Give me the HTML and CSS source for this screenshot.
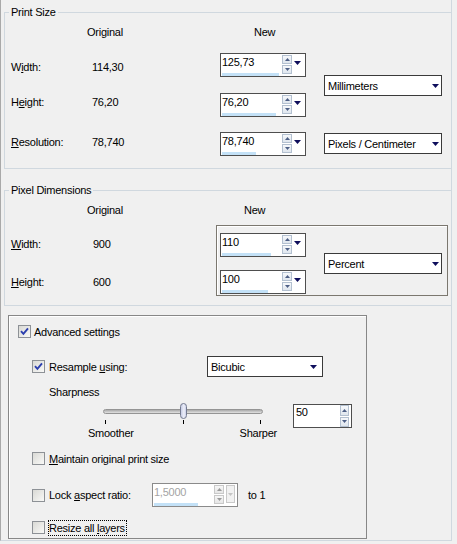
FILE: index.html
```html
<!DOCTYPE html>
<html>
<head>
<meta charset="utf-8">
<link rel="stylesheet" href="styles.css">
</head>
<body>
<div class="dialog">

  <fieldset class="grp print">
    <legend>Print Size</legend>
    <div class="cols">
      <div class="lcol">
        <div class="hdr">Original</div>
        <div class="lrow p1"><span class="lbl">W<u>i</u>dth:</span><span>114,30</span></div>
        <div class="lrow p2"><span class="lbl">H<u>e</u>ight:</span><span>76,20</span></div>
        <div class="lrow p3"><span class="lbl"><u>R</u>esolution:</span><span>78,740</span></div>
      </div>
      <div class="ncol">
        <div class="hdr nhdr">New</div>
        <div class="spin s1">
          <div class="field"><span class="val">125,73</span><span class="bar" style="width:57px"></span></div>
          <div class="btns"><span class="b up"><svg width="5" height="3" viewBox="0 0 5 3"><path d="M0 3h5L2.5 0z"/></svg></span><span class="b dn"><svg width="5" height="3" viewBox="0 0 5 3"><path d="M0 0h5L2.5 3z"/></svg></span></div>
          <div class="drop"><svg width="7" height="4" viewBox="0 0 7 4"><path d="M0 0h7L3.5 4z"/></svg></div>
        </div>
        <div class="spin s2">
          <div class="field"><span class="val">76,20</span><span class="bar" style="width:54px"></span></div>
          <div class="btns"><span class="b up"><svg width="5" height="3" viewBox="0 0 5 3"><path d="M0 3h5L2.5 0z"/></svg></span><span class="b dn"><svg width="5" height="3" viewBox="0 0 5 3"><path d="M0 0h5L2.5 3z"/></svg></span></div>
          <div class="drop"><svg width="7" height="4" viewBox="0 0 7 4"><path d="M0 0h7L3.5 4z"/></svg></div>
        </div>
        <div class="spin s3">
          <div class="field"><span class="val">78,740</span><span class="bar" style="width:34px"></span></div>
          <div class="btns"><span class="b up"><svg width="5" height="3" viewBox="0 0 5 3"><path d="M0 3h5L2.5 0z"/></svg></span><span class="b dn"><svg width="5" height="3" viewBox="0 0 5 3"><path d="M0 0h5L2.5 3z"/></svg></span></div>
          <div class="drop"><svg width="7" height="4" viewBox="0 0 7 4"><path d="M0 0h7L3.5 4z"/></svg></div>
        </div>
      </div>
      <div class="ucol">
        <div class="sel u1"><span>Millimeters</span><svg width="7" height="4" viewBox="0 0 7 4"><path d="M0 0h7L3.5 4z"/></svg></div>
        <div class="sel u2"><span>Pixels / Centimeter</span><svg width="7" height="4" viewBox="0 0 7 4"><path d="M0 0h7L3.5 4z"/></svg></div>
      </div>
    </div>
  </fieldset>

  <fieldset class="grp pixel">
    <legend>Pixel Dimensions</legend>
    <div class="cols">
      <div class="lcol lcol2">
        <div class="hdr">Original</div>
        <div class="lrow q1"><span class="lbl"><u>W</u>idth:</span><span class="pv">900</span></div>
        <div class="lrow q2"><span class="lbl"><u>H</u>eight:</span><span class="pv">600</span></div>
      </div>
      <div class="ncol2">
        <div class="hdr nhdr2">New</div>
        <div class="pbox">
          <div class="pspins">
            <div class="spin">
              <div class="field"><span class="val">110</span><span class="bar" style="width:49px"></span></div>
              <div class="btns"><span class="b up"><svg width="5" height="3" viewBox="0 0 5 3"><path d="M0 3h5L2.5 0z"/></svg></span><span class="b dn"><svg width="5" height="3" viewBox="0 0 5 3"><path d="M0 0h5L2.5 3z"/></svg></span></div>
              <div class="drop"><svg width="7" height="4" viewBox="0 0 7 4"><path d="M0 0h7L3.5 4z"/></svg></div>
            </div>
            <div class="spin s4">
              <div class="field"><span class="val">100</span><span class="bar" style="width:46px"></span></div>
              <div class="btns"><span class="b up"><svg width="5" height="3" viewBox="0 0 5 3"><path d="M0 3h5L2.5 0z"/></svg></span><span class="b dn"><svg width="5" height="3" viewBox="0 0 5 3"><path d="M0 0h5L2.5 3z"/></svg></span></div>
              <div class="drop"><svg width="7" height="4" viewBox="0 0 7 4"><path d="M0 0h7L3.5 4z"/></svg></div>
            </div>
          </div>
          <div class="sel pct"><span>Percent</span><svg width="7" height="4" viewBox="0 0 7 4"><path d="M0 0h7L3.5 4z"/></svg></div>
        </div>
      </div>
    </div>
  </fieldset>

  <div class="adv">
    <div class="arow a1">
      <span class="cb"><svg width="11" height="11" viewBox="0 0 11 11"><path d="M2 5.2l2.4 2.6L9 2.4"/></svg></span>
      <span class="atext">Advanced settings</span>
    </div>
    <div class="arow a2">
      <span class="cb"><svg width="11" height="11" viewBox="0 0 11 11"><path d="M2 5.2l2.4 2.6L9 2.4"/></svg></span>
      <span class="ltext rlabel">Resample <u>u</u>sing:</span>
      <div class="sel bic"><span>Bicubic</span><svg width="7" height="4" viewBox="0 0 7 4"><path d="M0 0h7L3.5 4z"/></svg></div>
    </div>
    <div class="arow a3">Sharpness</div>
    <div class="a4">
      <div class="slider">
        <div class="trackwrap">
          <div class="track"></div>
          <div class="thumb"></div>
        </div>
        <div class="ticks"><span class="tick"></span><span class="tick"></span><span class="tick"></span></div>
        <div class="slabels"><span>Smoother</span><span>Sharper</span></div>
      </div>
      <div class="spin spin50">
        <div class="field"><span class="val">50</span></div>
        <div class="btns"><span class="b up"><svg width="5" height="3" viewBox="0 0 5 3"><path d="M0 3h5L2.5 0z"/></svg></span><span class="b dn"><svg width="5" height="3" viewBox="0 0 5 3"><path d="M0 0h5L2.5 3z"/></svg></span></div>
      </div>
    </div>
    <div class="arow a5">
      <span class="cb"></span>
      <span class="ltext"><u>M</u>aintain original print size</span>
    </div>
    <div class="arow a6">
      <span class="cb"></span>
      <span class="ltext locklabel">Lock <u>a</u>spect ratio:</span>
      <div class="spin dis">
        <div class="field"><span class="val">1,5000</span><span class="bar" style="width:44px"></span></div>
        <div class="btns"><span class="b up"><svg width="5" height="3" viewBox="0 0 5 3"><path d="M0 3h5L2.5 0z"/></svg></span><span class="b dn"><svg width="5" height="3" viewBox="0 0 5 3"><path d="M0 0h5L2.5 3z"/></svg></span></div>
        <div class="dropdis"><svg width="5" height="3" viewBox="0 0 5 3"><path d="M0 0h5L2.5 3z"/></svg></div>
      </div>
      <span class="to1">to 1</span>
    </div>
    <div class="arow a7">
      <span class="cb"></span>
      <span class="focus">Resize all <u>l</u>ayers</span>
    </div>
  </div>

</div>
</body>
</html>
```

FILE: styles.css
```css
* { box-sizing: border-box; }
html, body { margin: 0; padding: 0; }
body {
  background: #f0f0f0;
  font-family: "Liberation Sans", Arial, sans-serif;
  font-size: 11px;
  letter-spacing: -0.25px;
  color: #000;
  width: 457px;
  height: 544px;
  overflow: hidden;
}
u { text-decoration: underline; text-underline-offset: 1px; }

.dialog {
  width: 452px;
  height: 541px;
  border-left: 1px solid #a9a9a9;
  border-right: 1px solid #d0d8df;
  border-bottom: 1px solid #d0d8df;
  overflow: hidden;
}

/* group boxes */
.grp {
  margin: 0 0 0 3px;
  padding: 0 0 12px 0;
  border: 1px solid #d0d8df;
  border-right: none;
  min-width: 0;
}
.print { margin-top: 6px; }
.pixel { margin-top: 15px; padding-bottom: 9px; }
legend {
  margin-left: 4px;
  padding: 0 2px;
  height: 13px;
  line-height: 13px;
}

.cols { display: flex; padding-left: 6px; }
.lcol { width: 209px; }
.lcol2 { width: 205px; }
.hdr { height: 26px; line-height: 26px; }
.lcol .hdr { padding-left: 76px; }
.nhdr { padding-left: 34px; }
.nhdr2 { padding-left: 28px; }
.lrow { display: flex; height: 14px; line-height: 14px; }
.lbl { width: 81px; }
.pv { padding-left: 1px; }
.p1 { margin-top: 15px; }
.p2 { margin-top: 21px; }
.p3 { margin-top: 26px; }
.q1 { margin-top: 14px; }
.q2 { margin-top: 24px; }

.ncol { width: 86px; }
.s1 { margin-top: 8px; }
.s2 { margin-top: 16px; }
.s3 { margin-top: 15px; }
.ucol { margin-left: 18px; width: 118px; }
.u1 { margin-top: 56px; }
.u2 { margin-top: 37px; }

.ncol2 { width: 232px; }
.pbox {
  margin-top: 2px;
  height: 71px;
  border: 1px solid #7b776f;
  box-shadow: inset 1px 1px 0 #fff;
  display: flex;
  padding: 7px 5px 0 3px;
}
.pspins { width: 86px; }
.s4 { margin-top: 13px; }
.pct { margin-left: 18px; margin-top: 20px; }

/* spin box */
.spin {
  display: flex;
  width: 86px;
  height: 24px;
  border: 1px solid #4e4e4e;
  background: #fff;
}
.spin .field {
  width: 60px;
  display: flex;
  flex-direction: column;
  padding: 2px 0 0 1px;
}
.spin .val { flex: 1; line-height: 13px; padding-left: 0; }
.spin .bar { height: 3px; background: #c3e1f7; }
.spin .btns {
  width: 10px;
  height: 19px;
  margin: 1px 0 0 1px;
  display: flex;
  flex-direction: column;
  gap: 1px;
}
.spin .b {
  flex: 1;
  border: 1px solid #b3c0d0;
  background: linear-gradient(#f6f8fb, #dfe6ee);
  display: flex;
  align-items: center;
  justify-content: center;
}
.spin .b svg { display: block; fill: #4d5f86; }
.spin .drop { width: 13px; padding: 7px 0 0 2px; }
.spin .drop svg, .sel svg { display: block; fill: #0e0e5c; }

.spin50 { width: 59px; margin-left: 13px; margin-top: 5px; }
.spin50 .field { width: 45px; padding-top: 1px; padding-left: 2px; }
.spin50 .btns { width: 9px; height: 22px; margin: 0 0 0 1px; }

.spin.dis { border-color: #8a8a8a; }
.spin.dis .val { color: #a4a4a4; }
.spin.dis .b { border-color: #c9c9c9; background: linear-gradient(#f7f7f7, #e6e6e6); }
.spin.dis .b svg { fill: #9a9a9a; }
.dropdis {
  width: 9px;
  height: 18px;
  margin: 1px 0 0 2px;
  border: 1px solid #c9c9c9;
  background: #f1f1f1;
  display: flex;
  align-items: center;
  justify-content: center;
}
.dropdis svg { display: block; fill: #c4c4c4; }

/* dropdown */
.sel {
  display: flex;
  align-items: center;
  justify-content: space-between;
  width: 118px;
  height: 21px;
  border: 1px solid #3a3a3a;
  background: #fff;
  padding: 0 2px 0 3px;
}
.bic { width: 116px; padding-right: 5px; }

/* advanced */
.adv {
  margin: 9px 0 0 7px;
  width: 359px;
  height: 224px;
  border: 1px solid #878787;
  box-shadow: inset 1px 1px 0 #fff;
  padding-left: 9px;
}
.arow { display: flex; align-items: center; }
.a1 { margin-top: 9px; height: 13px; }
.a1 .atext { margin-left: 3px; }
.a2 { margin-top: 18px; height: 21px; padding-left: 14px; }
.ltext { margin-left: 4px; }
.rlabel { width: 158px; }
.a3 { margin-top: 8px; height: 14px; padding-left: 31px; }
.a4 { display: flex; align-items: flex-start; padding-left: 70px; }
.slider { margin-top: 3px; width: 192px; }
.trackwrap { position: relative; height: 17px; padding: 7px 0 0 15px; }
.track {
  width: 160px;
  height: 5px;
  border: 1px solid #949494;
  border-radius: 3px;
  background: linear-gradient(#a9a9a9, #e2e2e2);
}
.thumb {
  position: absolute;
  left: 92px;
  top: 1px;
  width: 7px;
  height: 16px;
  border: 1px solid #737a90;
  border-radius: 4px;
  background: linear-gradient(90deg, #c6cbe4, #eef0fa 60%, #c9cde6);
}
.ticks {
  display: flex;
  justify-content: space-between;
  height: 4px;
  margin-top: 1px;
  padding: 0 19px 0 17px;
}
.tick { width: 1px; height: 4px; background: #000; }
.slabels {
  display: flex;
  justify-content: space-between;
  margin-top: 2px;
  line-height: 14px;
  padding-right: 3px;
}
.a5 { margin-top: 12px; height: 13px; padding-left: 14px; }
.a6 { margin-top: 18px; height: 24px; padding-left: 14px; }
.locklabel { width: 103px; }
.to1 { margin-left: 10px; }
.a7 { margin-top: 14px; height: 13px; padding-left: 14px; }
.focus {
  margin-left: 3px;
  border: 1px dotted #000;
  line-height: 14px;
  padding: 0 1px 0 0;
}

.cb {
  flex: none;
  width: 13px;
  height: 13px;
  border: 1px solid #8d9196;
  background: linear-gradient(135deg, #d9d9d5, #f9f9f7);
  display: flex;
  align-items: center;
  justify-content: center;
}
.cb svg { display: block; }
.cb path { fill: none; stroke: #2c3fae; stroke-width: 1.9; }
```
